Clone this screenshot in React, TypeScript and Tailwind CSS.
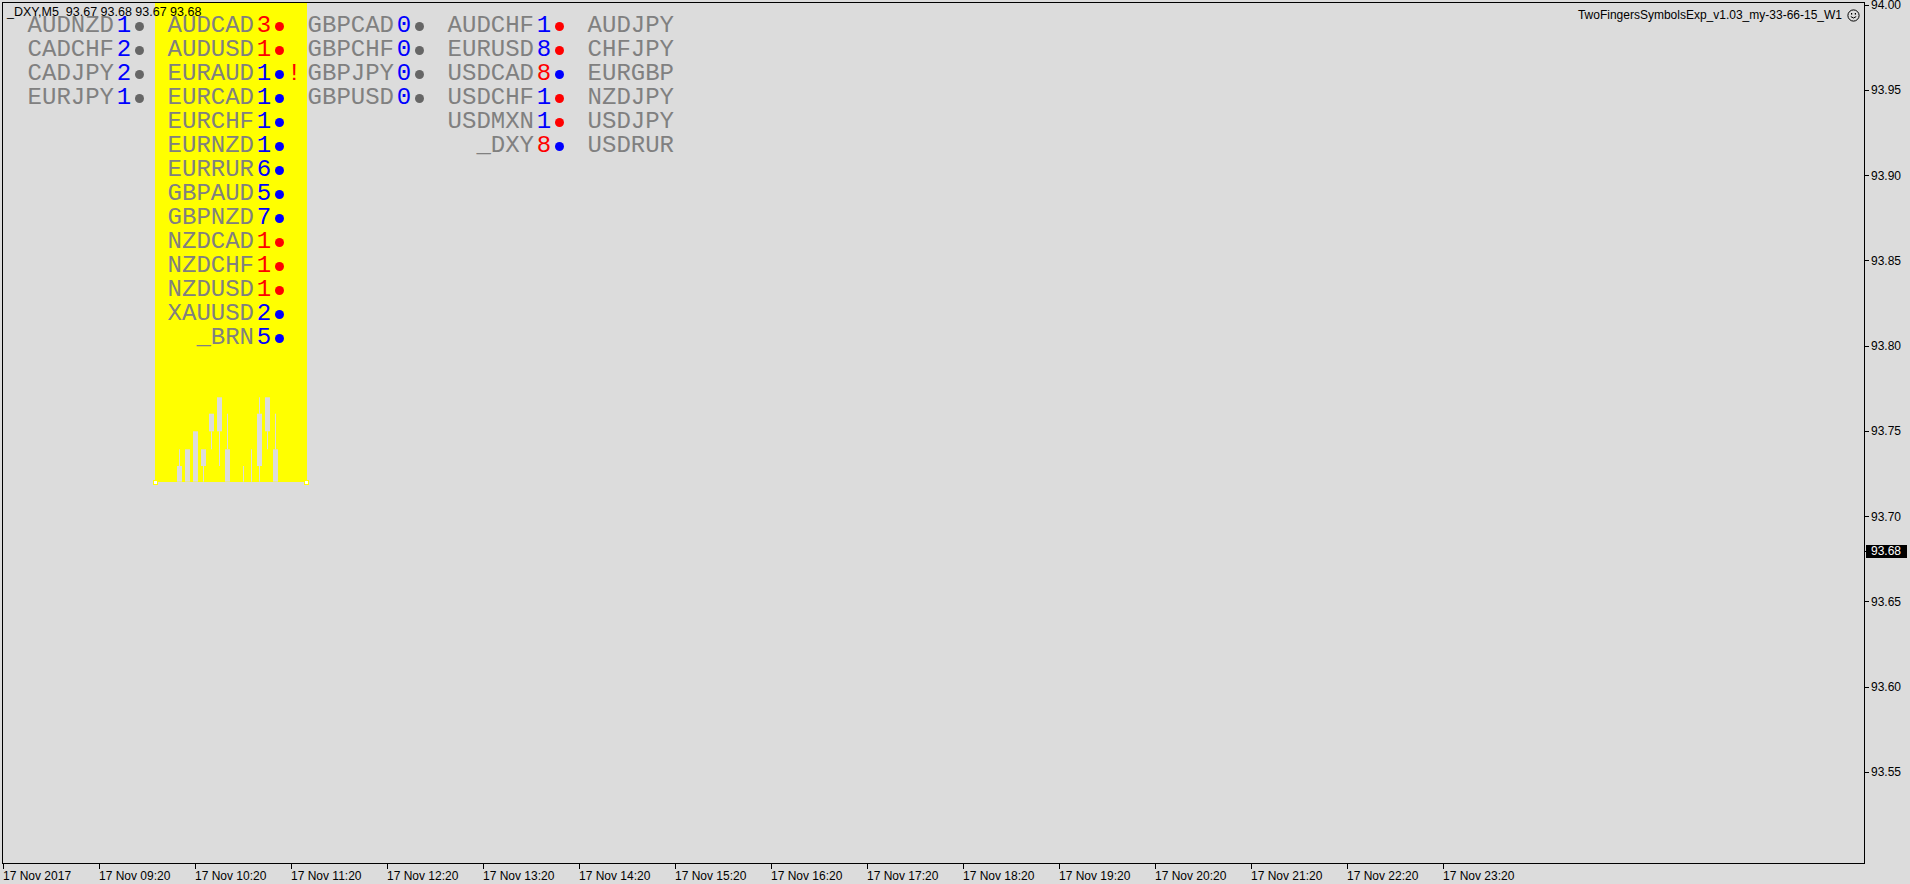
const BLUE = "text-[#0000ff]";
const RED = "text-[#ff0000]";

const digitColor: Record<string, string> = { b: BLUE, r: RED };
const dotColor: Record<string, string> = {
  b: "bg-[#0000ff]",
  r: "bg-[#ff0000]",
  g: "bg-[#666666]",
};

type Row = { name: string; num?: string; nc?: string; dot?: string; bang?: boolean };

const columns: Row[][] = [
  [
    { name: "AUDNZD", num: "1", nc: "b", dot: "g" },
    { name: "CADCHF", num: "2", nc: "b", dot: "g" },
    { name: "CADJPY", num: "2", nc: "b", dot: "g" },
    { name: "EURJPY", num: "1", nc: "b", dot: "g" },
  ],
  [
    { name: "AUDCAD", num: "3", nc: "r", dot: "r" },
    { name: "AUDUSD", num: "1", nc: "r", dot: "r" },
    { name: "EURAUD", num: "1", nc: "b", dot: "b", bang: true },
    { name: "EURCAD", num: "1", nc: "b", dot: "b" },
    { name: "EURCHF", num: "1", nc: "b", dot: "b" },
    { name: "EURNZD", num: "1", nc: "b", dot: "b" },
    { name: "EURRUR", num: "6", nc: "b", dot: "b" },
    { name: "GBPAUD", num: "5", nc: "b", dot: "b" },
    { name: "GBPNZD", num: "7", nc: "b", dot: "b" },
    { name: "NZDCAD", num: "1", nc: "r", dot: "r" },
    { name: "NZDCHF", num: "1", nc: "r", dot: "r" },
    { name: "NZDUSD", num: "1", nc: "r", dot: "r" },
    { name: "XAUUSD", num: "2", nc: "b", dot: "b" },
    { name: "_BRN", num: "5", nc: "b", dot: "b" },
  ],
  [
    { name: "GBPCAD", num: "0", nc: "b", dot: "g" },
    { name: "GBPCHF", num: "0", nc: "b", dot: "g" },
    { name: "GBPJPY", num: "0", nc: "b", dot: "g" },
    { name: "GBPUSD", num: "0", nc: "b", dot: "g" },
  ],
  [
    { name: "AUDCHF", num: "1", nc: "b", dot: "r" },
    { name: "EURUSD", num: "8", nc: "b", dot: "r" },
    { name: "USDCAD", num: "8", nc: "r", dot: "b" },
    { name: "USDCHF", num: "1", nc: "b", dot: "r" },
    { name: "USDMXN", num: "1", nc: "b", dot: "r" },
    { name: "_DXY", num: "8", nc: "r", dot: "b" },
  ],
  [
    { name: "AUDJPY" },
    { name: "CHFJPY" },
    { name: "EURGBP" },
    { name: "NZDJPY" },
    { name: "USDJPY" },
    { name: "USDRUR" },
  ],
];

const prices = ["94.00", "93.95", "93.90", "93.85", "93.80", "93.75", "93.70", "93.65", "93.60", "93.55"];

const times = [
  "17 Nov 2017",
  "17 Nov 09:20",
  "17 Nov 10:20",
  "17 Nov 11:20",
  "17 Nov 12:20",
  "17 Nov 13:20",
  "17 Nov 14:20",
  "17 Nov 15:20",
  "17 Nov 16:20",
  "17 Nov 17:20",
  "17 Nov 18:20",
  "17 Nov 19:20",
  "17 Nov 20:20",
  "17 Nov 21:20",
  "17 Nov 22:20",
  "17 Nov 23:20",
];

// histogram levels inside the yellow box (box height 479)
const L = [478.7, 463, 446.3, 428.3, 410.7, 394.3];
// [slot, kind, from level, to level]; kind b = body, w = wick
const bars: [number, "b" | "w", number, number][] = [
  [0, "b", 1, 0], [0, "w", 2, 1],
  [1, "b", 2, 0],
  [2, "b", 3, 0],
  [3, "b", 2, 1], [3, "w", 1, 0],
  [4, "b", 4, 3], [4, "w", 3, 2],
  [5, "b", 5, 3], [5, "w", 3, 1],
  [6, "w", 4, 2], [6, "b", 2, 0],
  [8, "w", 1, 0],
  [9, "w", 2, 0],
  [10, "w", 5, 4], [10, "b", 4, 1], [10, "w", 1, 0],
  [11, "b", 5, 3], [11, "w", 3, 2],
  [12, "w", 4, 2], [12, "b", 2, 0],
];

function Smiley() {
  return (
    <svg width="13" height="13" viewBox="0 0 13 13" className="shrink-0">
      <circle cx="6.5" cy="6.5" r="5.6" fill="none" stroke="#000" strokeWidth="1" />
      <rect x="4" y="4" width="1.2" height="1.6" fill="#000" />
      <rect x="7.8" y="4" width="1.2" height="1.6" fill="#000" />
      <path d="M3.8 7.6 Q6.5 10.4 9.2 7.6" fill="none" stroke="#000" strokeWidth="1" />
    </svg>
  );
}

function SymbolRow({ row }: { row: Row }) {
  return (
    <div className="flex h-[24px] items-center whitespace-nowrap leading-[24px]">
      <span className="w-[100px] shrink-0 text-right text-[#808080]">{row.name}</span>
      {row.num && (
        <>
          <span className={`w-[20px] shrink-0 text-center ${digitColor[row.nc ?? "b"]}`}>{row.num}</span>
          <span className={`ml-px h-[9px] w-[9px] shrink-0 rounded-full ${dotColor[row.dot ?? "g"]}`} />
        </>
      )}
      {row.bang && <span className="ml-[3px] shrink-0 text-[#ff0000]">!</span>}
    </div>
  );
}

function YellowBox() {
  return (
    <div className="absolute left-[152px] top-0 h-[479px] w-[152px] bg-[#ffff00]">
      <svg width="152" height="479" className="absolute left-0 top-0">
        {bars.map(([i, kind, a, b], k) => {
          const y1 = L[a];
          const y2 = L[b];
          const x = kind === "b" ? 22 + 8 * i : 24 + 8 * i;
          const w = kind === "b" ? 5 : 1;
          return <rect key={k} x={x} y={y1} width={w} height={y2 - y1} fill="#dcdcdc" />;
        })}
      </svg>
      <div className="absolute -bottom-[3px] -left-[2px] h-[5px] w-[5px] border border-[#ffff00] bg-white" />
      <div className="absolute -bottom-[3px] -right-[2px] h-[5px] w-[5px] border border-[#ffff00] bg-white" />
    </div>
  );
}

export default function App() {
  return (
    <div
      className="flex h-[884px] w-[1910px] flex-col overflow-hidden bg-[#dcdcdc] pl-[2px] pt-[2px] text-[12px] text-black"
      style={{ fontFamily: '"Liberation Sans", Arial, sans-serif' }}
    >
      <div className="flex h-[862px]">
        {/* chart */}
        <div className="relative h-full w-[1863px] shrink-0 border border-black">
          <YellowBox />

          <div
            className="relative flex pl-[11px] pt-[11px] text-[24px]"
            style={{ fontFamily: '"Liberation Mono", "Courier New", monospace' }}
          >
            {columns.map((col, ci) => (
              <div key={ci} className="flex w-[140px] shrink-0 flex-col">
                {col.map((row) => (
                  <SymbolRow key={row.name} row={row} />
                ))}
              </div>
            ))}
          </div>

          {/* header overlay */}
          <div className="absolute left-[4px] top-[3px] whitespace-pre leading-[12px] text-[12.5px]">
            _DXY,M5  93.67 93.68 93.67 93.68
          </div>

          {/* expert name */}
          <div className="absolute right-[4px] top-[5px] flex items-center gap-[5px] leading-[14px]">
            <span>TwoFingersSymbolsExp_v1.03_my-33-66-15_W1</span>
            <Smiley />
          </div>
        </div>

        {/* price scale */}
        <div className="relative flex-1">
          <div className="-mt-[4px] flex flex-col">
            {prices.map((p) => (
              <div key={p} className="h-[85.28px] shrink-0">
                <div className="flex h-[14px] items-center">
                  <span className="h-px w-[4px] bg-black" />
                  <span className="ml-[2px] leading-[14px]">{p}</span>
                </div>
              </div>
            ))}
          </div>
          <div className="absolute left-0 top-[543px] flex h-[13px] items-center">
            <span className="h-px w-[1px] bg-black" />
            <span className="h-[13px] w-[41px] bg-black pl-[5px] leading-[13px] text-white">93.68</span>
          </div>
        </div>
      </div>

      {/* time scale */}
      <div className="ml-px flex">
        {times.map((t) => (
          <div key={t} className="flex w-[96px] shrink-0 flex-col">
            <span className="h-[5px] w-px bg-black" />
            <span className="whitespace-nowrap leading-[14px]">{t}</span>
          </div>
        ))}
      </div>
    </div>
  );
}
